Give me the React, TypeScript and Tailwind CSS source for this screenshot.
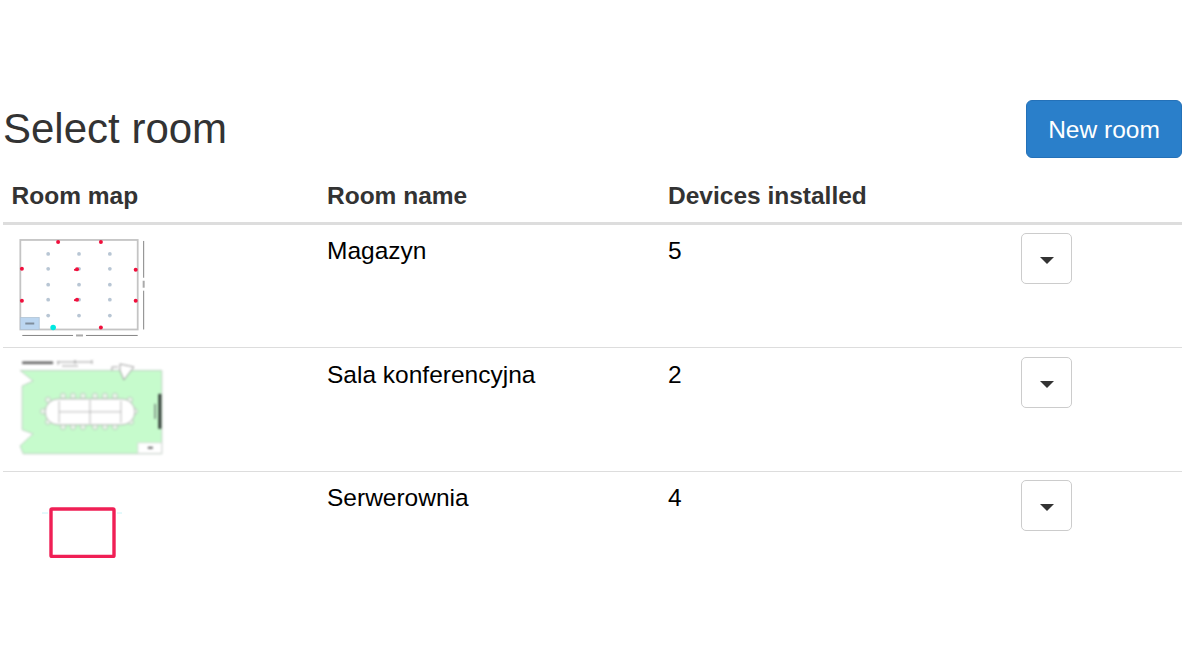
const font = 'font-["Liberation_Sans",Arial,sans-serif]'

type Room = { name: string; devices: number; map: 'grid' | 'conference' | 'server'; cell: string }

const rooms: Room[] = [
  { name: 'Magazyn', devices: 5, map: 'grid', cell: 'py-2' },
  // row heights are fractional in the original, this one lands a pixel lower
  { name: 'Sala konferencyjna', devices: 2, map: 'conference', cell: 'pt-[9px] pb-[7px]' },
  { name: 'Serwerownia', devices: 4, map: 'server', cell: 'py-2' },
]

const red = [
  [58, 242], [101, 242], [21.6, 269], [136, 270], [77, 269.5], [21.6, 301], [136, 301], [77, 300], [101, 328],
]

function GridMap() {
  const xs = [48, 79, 110]
  const ys = [254, 269, 285, 300, 316]
  return (
    <svg width="140" height="106.45" viewBox="11 233 140 107" className="block">
      <g style={{ filter: 'blur(0.8px)' }}>
        <rect x="20" y="240" width="118" height="90" fill="#fff" stroke="#c4c4c4" strokeWidth="1.8" />
        <rect x="20" y="318" width="19" height="12" fill="#bcd6f0" stroke="#b0c2d4" strokeWidth="0.8" />
        <rect x="25" y="323" width="9" height="2" fill="#7f8e9c" />
        {ys.map((y) => xs.map((x) => <circle key={`${x}-${y}`} cx={x} cy={y} r="1.9" fill="#b8c6d4" />))}
        {red.map(([x, y]) => (
          <circle key={`${x}-${y}`} cx={x} cy={y} r="2" fill="#f00f3c" />
        ))}
        <circle cx="75" cy="270" r="1.1" fill="#f00f3c" />
        <circle cx="75" cy="300.5" r="1.1" fill="#f00f3c" />
        <circle cx="53" cy="328" r="2.8" fill="#00e8e0" />
        <path d="M144 241V278M144 291V330M22 336H73M86 336H138" stroke="#777" strokeWidth="0.9" fill="none" />
        <rect x="143" y="281" width="2" height="7" fill="#aaa" />
        <rect x="76" y="335" width="7" height="2" fill="#aaa" />
      </g>
    </svg>
  )
}

function ConferenceMap() {
  const seats = [63, 73, 83, 95, 105, 115]
  return (
    <svg width="155" height="106.75" viewBox="11 357 155 107" className="block">
      <g style={{ filter: 'blur(0.85px)' }}>
        <path
          d="M20 371.5H162V455H23L20 447L33 435L22 431V387L33 382Z"
          fill="#c6fbcc"
          stroke="#b8c8bc"
          strokeWidth="0.8"
        />
        <rect x="138" y="444" width="24" height="10.5" fill="#fff" stroke="#d0d0d0" strokeWidth="0.7" />
        <rect x="148" y="448" width="5" height="2" fill="#666" />
        <rect x="158.5" y="395" width="3" height="35" fill="#333d38" />
        <rect x="154.5" y="405" width="1.6" height="15" fill="#7a8a80" />
        <rect x="22" y="362.5" width="31" height="2.6" fill="#666" />
        <path d="M57 363H92M58 362V366M75 361V365M92 361V365M62 367H78" stroke="#888" strokeWidth="0.8" fill="none" />
        <path d="M120 365L134 368L124 381L120 371.5Z" fill="#fff" stroke="#888" strokeWidth="0.8" />
        <path d="M112 371.5V368H118" fill="none" stroke="#888" strokeWidth="0.8" />
        {seats.map((x) => (
          <g key={x} fill="#eaf6ea" stroke="#a8b8ac" strokeWidth="0.6">
            <circle cx={x} cy="397" r="2.8" />
            <circle cx={x} cy="428" r="2.8" />
          </g>
        ))}
        <g fill="#eaf6ea" stroke="#a8b8ac" strokeWidth="0.6">
          <circle cx="48" cy="401" r="2.8" />
          <circle cx="43" cy="412.5" r="2.8" />
          <circle cx="48" cy="423" r="2.8" />
          <circle cx="130" cy="401" r="2.8" />
          <circle cx="135" cy="412.5" r="2.8" />
          <circle cx="131" cy="423" r="2.8" />
        </g>
        <rect x="45" y="400" width="90" height="26" rx="13" fill="#fff" stroke="#a8a8a8" strokeWidth="0.8" />
        <path d="M59 402V424M90 401V425M121 402V424M59 413H121" stroke="#aaa" strokeWidth="0.8" fill="none" />
      </g>
    </svg>
  )
}

function ServerMap() {
  return (
    <svg width="140" height="78" viewBox="11 480 140 78" className="block">
      <path d="M42 513H48M117 513H122M65 556H72M100 556H107" stroke="#c8f4f8" strokeWidth="1" />
      <rect x="51" y="509" width="63" height="47.5" fill="#fff" stroke="#f01f55" strokeWidth="3.4" rx="1" style={{ filter: 'blur(0.55px)' }} />
    </svg>
  )
}

function RoomMap({ kind }: { kind: Room['map'] }) {
  if (kind === 'grid') return <GridMap />
  if (kind === 'conference') return <ConferenceMap />
  return <ServerMap />
}

export default function App() {
  return (
    <div className={`${font} h-[670px] overflow-hidden bg-white pt-[100px] pl-[3px] pr-[18px]`}>
      <div className="mb-[13px] flex items-center justify-between">
        <h1 className="text-[42px] leading-[58px] font-normal text-[#333]">Select room</h1>
        <button className="h-[58px] w-[156px] rounded-[6px] border border-[#2471b8] bg-[#2a7fca] pt-[2px] text-[24.5px] text-white">
          New room
        </button>
      </div>
      <table className="w-full table-fixed border-collapse text-[24.5px] leading-[35px]">
        <colgroup>
          <col className="w-[315px]" />
          <col className="w-[341px]" />
          <col className="w-[353px]" />
          <col />
        </colgroup>
        <thead>
          <tr className="border-b-[3px] border-[#ddd] text-left text-[#333]">
            <th className="px-[8.6px] pt-[7px] pb-[9px] font-bold">Room map</th>
            <th className="px-[9px] pt-[7px] pb-[9px] font-bold">Room name</th>
            <th className="px-[9px] pt-[7px] pb-[9px] font-bold">Devices installed</th>
            <th />
          </tr>
        </thead>
        <tbody>
          {rooms.map((room, i) => (
            <tr key={room.name} className={i < rooms.length - 1 ? 'border-b border-[#ddd]' : ''}>
              <td className="p-2 align-top">
                <RoomMap kind={room.map} />
              </td>
              <td className={`px-[9px] ${room.cell} align-top text-black`}>{room.name}</td>
              <td className={`px-[9px] ${room.cell} align-top text-black`}>{room.devices}</td>
              <td className={`${room.cell} pl-[9px] align-top`}>
                <button className="flex h-[51px] w-[51px] items-center justify-center rounded-[5px] border border-[#ccc] bg-white">
                  <span className="mt-[4px] h-0 w-0 border-x-[7px] border-t-[7px] border-x-transparent border-t-[#333]" />
                </button>
              </td>
            </tr>
          ))}
        </tbody>
      </table>
    </div>
  )
}
